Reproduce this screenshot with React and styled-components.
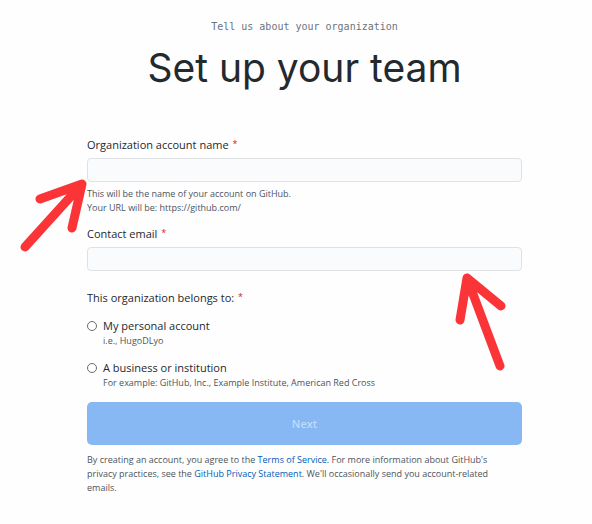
import React from "react";
import styled, { createGlobalStyle } from "styled-components";

const GlobalStyle = createGlobalStyle`
  *, *::before, *::after { box-sizing: border-box; }
  body {
    margin: 0;
    background: #fefefe;
    color: #24292e;
    font-family: "Open Sans", "Noto Sans", sans-serif;
    font-size: 11px;
    line-height: 16px;
  }
`;

const Page = styled.main`
  padding: 20px 70px 24px 87px;
`;

const Header = styled.header`
  text-align: center;
  margin-bottom: 44px;
`;

const Eyebrow = styled.p`
  margin: 0;
  color: #6a737d;
  font-family: "DejaVu Sans Mono", "Liberation Mono", monospace;
  font-size: 10px;
  line-height: 14px;
`;

const Title = styled.h1`
  margin: 9px 0 0;
  font-family: Inter, sans-serif;
  font-size: 39px;
  font-weight: 400;
  line-height: 50px;
  white-space: nowrap;
`;

const Field = styled.div`
  margin-bottom: ${({ $gap }) => $gap}px;
`;

const Label = styled.label`
  display: block;
  margin-bottom: 5px;
  font-weight: 500;
`;

const Required = styled.span`
  margin-left: 1px;
  color: #cb2431;
  font-size: 9px;
  line-height: 14px;
  vertical-align: top;
`;

const InputWrap = styled.div`
  position: relative;
`;

const Input = styled.input`
  display: block;
  width: 100%;
  height: 24px;
  padding: 0 8px;
  border: 1px solid #dfe2e5;
  border-radius: 4px;
  background: #fafbfc;
  font: inherit;
  color: inherit;
`;

const Small = styled.p`
  margin: ${({ $top }) => $top || 0}px 0 0;
  color: #4c545c;
  font-size: 9px;
  line-height: 14px;
`;

const Terms = styled(Small)`
  padding-right: 24px;
`;

const Arrow = styled.svg`
  position: absolute;
  z-index: 1;
  top: ${({ $top }) => $top};
  left: ${({ $left }) => $left || "auto"};
  right: ${({ $right }) => $right || "auto"};
  fill: none;
  stroke: #fb3437;
  stroke-width: 9;
  stroke-linecap: round;
  stroke-linejoin: round;
  pointer-events: none;
`;

const Choices = styled.fieldset`
  margin: 0 0 12px;
  padding: 0;
  border: 0;
  min-width: 0;
`;

const Legend = styled.legend`
  margin-bottom: 12px;
  padding: 0;
  font-weight: 500;
`;

const Choice = styled.div`
  display: grid;
  grid-template-columns: 10px 1fr;
  column-gap: 6px;
  align-items: center;

  & + & { margin-top: 12px; }
  ${Small} { grid-column: 2; }
`;

const Radio = styled.input`
  appearance: none;
  width: 10px;
  height: 10px;
  margin: 0;
  border: 1px solid #6b6b6b;
  border-radius: 50%;
  background: #fff;

  &:checked { border: 3px solid #0366d6; }
`;

const ChoiceLabel = styled.label`
  font-weight: 500;
`;

const Submit = styled.button`
  display: block;
  width: 100%;
  height: 43px;
  border: 0;
  border-radius: 5px;
  background: #88b8f3;
  color: #bddcfb;
  font: inherit;
  font-weight: 600;
`;

const Link = styled.a`
  color: #0559b8;
  text-decoration: none;
`;

export default function App() {
  return (
    <>
      <GlobalStyle />
      <Page>
        <Header>
          <Eyebrow>Tell us about your organization</Eyebrow>
          <Title>Set up your team</Title>
        </Header>
        <form onSubmit={(event) => event.preventDefault()}>
          <Field $gap={11}>
            <Label htmlFor="account">
              Organization account name <Required>*</Required>
            </Label>
            <InputWrap>
              <Input id="account" type="text" required aria-describedby="account-note" />
              <Arrow $top="20px" $left="-68px" width="70" height="76" viewBox="0 0 70 76" aria-hidden="true">
                <path d="M6 69L63 6M21 21L63 6L53 50" />
              </Arrow>
            </InputWrap>
            <Small id="account-note" $top={5}>
              This will be the name of your account on GitHub.
              <br />
              Your URL will be: https://github.com/
            </Small>
          </Field>
          <Field $gap={19}>
            <Label htmlFor="email">
              Contact email <Required>*</Required>
            </Label>
            <InputWrap>
              <Input id="email" type="email" required />
              <Arrow $top="24px" $right="15px" width="54" height="102" viewBox="0 0 54 102" aria-hidden="true">
                <path d="M47 95L14 7M7 49L14 7L48 35" />
              </Arrow>
            </InputWrap>
          </Field>
          <Choices>
            <Legend>
              This organization belongs to: <Required>*</Required>
            </Legend>
            <Choice>
              <Radio id="personal" type="radio" name="owner" />
              <ChoiceLabel htmlFor="personal">My personal account</ChoiceLabel>
              <Small>i.e., HugoDLyo</Small>
            </Choice>
            <Choice>
              <Radio id="business" type="radio" name="owner" />
              <ChoiceLabel htmlFor="business">A business or institution</ChoiceLabel>
              <Small>For example: GitHub, Inc., Example Institute, American Red Cross</Small>
            </Choice>
          </Choices>
          <Submit type="submit" disabled>Next</Submit>
          <Terms $top={8}>
            By creating an account, you agree to the <Link href="#terms">Terms of Service</Link>. For more
            information about GitHub's privacy practices, see the{" "}
            <Link href="#privacy">GitHub Privacy Statement</Link>. We'll occasionally send you
            account-related emails.
          </Terms>
        </form>
      </Page>
    </>
  );
}
